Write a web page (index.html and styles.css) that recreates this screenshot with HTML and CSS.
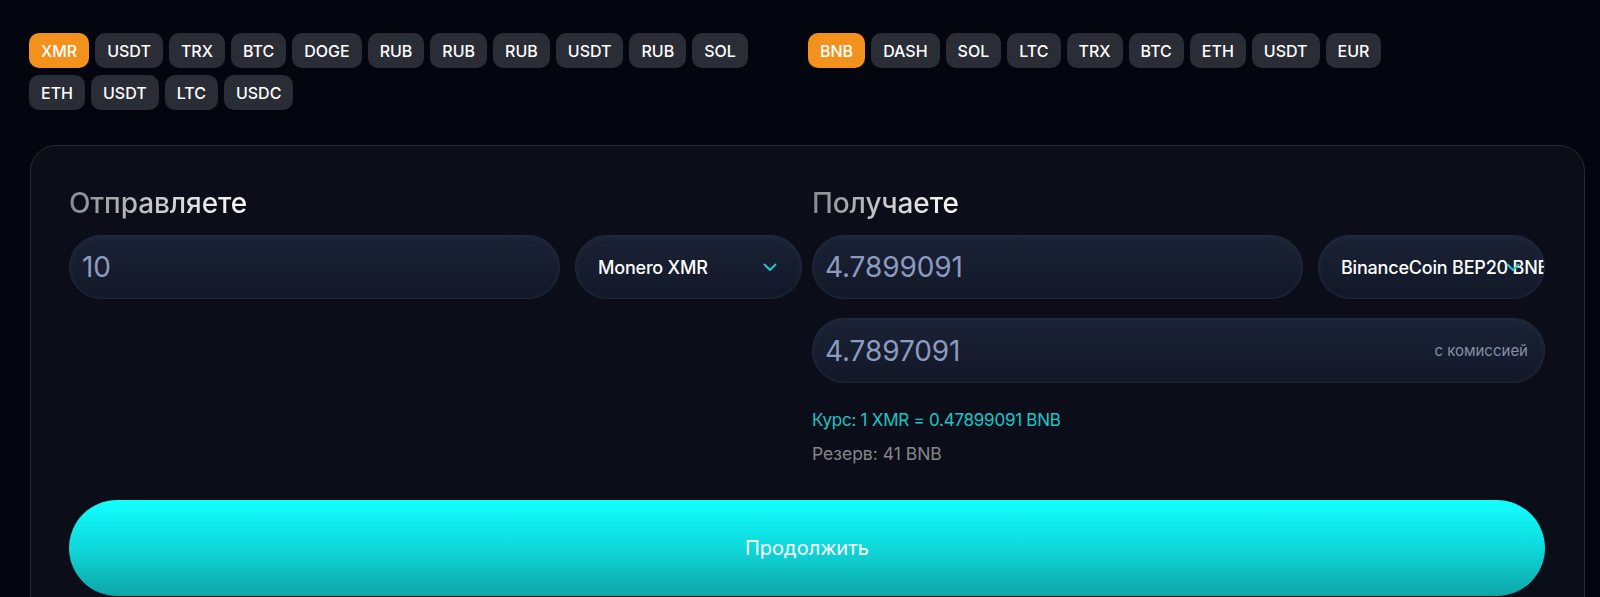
FILE: index.html
```html
<!DOCTYPE html>
<html lang="ru">
<head>
<meta charset="UTF-8" />
<meta name="viewport" content="width=device-width, initial-scale=1" />
<title>Обмен</title>
<link rel="stylesheet" href="styles.css">
</head>
<body>
<div class="page">
  <!-- быстрый выбор валют -->
  <div class="tabs">
    <div class="tab-group">
      <span class="chip active">XMR</span>
      <span class="chip">USDT</span>
      <span class="chip">TRX</span>
      <span class="chip">BTC</span>
      <span class="chip">DOGE</span>
      <span class="chip">RUB</span>
      <span class="chip">RUB</span>
      <span class="chip">RUB</span>
      <span class="chip">USDT</span>
      <span class="chip">RUB</span>
      <span class="chip">SOL</span>
      <span class="chip">ETH</span>
      <span class="chip">USDT</span>
      <span class="chip">LTC</span>
      <span class="chip">USDC</span>
    </div>
    <div class="tab-group">
      <span class="chip active">BNB</span>
      <span class="chip">DASH</span>
      <span class="chip">SOL</span>
      <span class="chip">LTC</span>
      <span class="chip">TRX</span>
      <span class="chip">BTC</span>
      <span class="chip">ETH</span>
      <span class="chip">USDT</span>
      <span class="chip">EUR</span>
    </div>
  </div>

  <!-- форма обмена -->
  <div class="card">
    <div class="columns">
      <div class="col">
        <h2 class="title"><span>Отправляете</span></h2>
        <div class="row">
          <div class="field"><span class="value">10</span></div>
          <div class="select">
            <span class="select-text">Monero XMR</span>
            <svg class="chevron" viewBox="0 0 14 9" width="14" height="9"><path d="M1.5 1.5 L7 7 L12.5 1.5" /></svg>
          </div>
        </div>
      </div>

      <div class="col">
        <h2 class="title"><span>Получаете</span></h2>
        <div class="row">
          <div class="field"><span class="value">4.7899091</span></div>
          <div class="select">
            <span class="select-text">BinanceCoin BEP20 BNB</span>
            <svg class="chevron" viewBox="0 0 14 9" width="14" height="9"><path d="M1.5 1.5 L7 7 L12.5 1.5" /></svg>
          </div>
        </div>
        <div class="field field-wide">
          <span class="value">4.7897091</span>
          <span class="hint">с комиссией</span>
        </div>
        <div class="rate">Курс: 1 XMR = 0.47899091 BNB</div>
        <div class="reserve">Резерв: 41 BNB</div>
      </div>
    </div>

    <button class="submit">Продолжить</button>
  </div>
</div>
</body>
</html>
```

FILE: styles.css
```css
body {
  margin: 0;
  background: #03060f;
  font-family: Inter, "Noto Sans", sans-serif;
  color: #fff;
}
.page {
  padding: 33px 15px 0 29px;
}

/* chips */
.tabs {
  display: grid;
  grid-template-columns: 760px 1fr;
  column-gap: 19px;
}
.tab-group {
  display: flex;
  flex-wrap: wrap;
  gap: 7px 6px;
  align-content: flex-start;
}
.chip {
  height: 35px;
  padding: 0 12px;
  display: flex;
  align-items: center;
  background: #2a2c36;
  border-radius: 10px;
  font-size: 16px;
  font-weight: 500;
  color: #fff;
}
.chip.active {
  background: #f2921d;
}

/* card */
.card {
  margin-top: 35px;
  margin-left: 1px;
  border: 1px solid #262a35;
  border-radius: 26px;
  background: #0b0e19;
  padding: 41px 39px 40px 38px;
}
.columns {
  display: grid;
  grid-template-columns: 1fr 1fr;
  column-gap: 10px;
}
.title {
  margin: 0 0 16px;
  font-size: 28px;
  line-height: 32px;
  font-weight: 500;
  letter-spacing: -0.1px;
}
.title span {
  background: linear-gradient(90deg, #8a8a8e 0%, #c4c4c8 45%, #ffffff 100%);
  -webkit-background-clip: text;
  background-clip: text;
  color: transparent;
}
.row {
  display: flex;
  gap: 15px;
}
.field {
  flex: 1;
  height: 64px;
  box-sizing: border-box;
  border: 1px solid #232a3a;
  border-radius: 32px;
  background: linear-gradient(180deg, #1a2234 0%, #121828 100%);
  box-shadow: inset 0 1px 6px rgba(90, 110, 150, 0.12);
  padding: 0 16px 0 12px;
  display: flex;
  align-items: center;
  justify-content: space-between;
}
.value {
  font-size: 28px;
  color: #8c9abf;
  letter-spacing: -0.1px;
}
.field-wide {
  margin-top: 19px;
  height: 65px;
}
.hint {
  font-size: 15px;
  color: #8690a4;
}
.select {
  position: relative;
  width: 227px;
  flex: none;
  height: 64px;
  box-sizing: border-box;
  border: 1px solid #232a3a;
  border-radius: 32px;
  background: linear-gradient(180deg, #1a2234 0%, #121828 100%);
  box-shadow: inset 0 1px 6px rgba(90, 110, 150, 0.12);
  padding-left: 22px;
  display: flex;
  align-items: center;
  overflow: hidden;
  white-space: nowrap;
}
.select-text {
  font-size: 18px;
  font-weight: 500;
  letter-spacing: -0.2px;
  color: #fff;
}
.chevron {
  position: absolute;
  right: 24px;
  top: 27px;
  fill: none;
  stroke: #1ccfcf;
  stroke-width: 1.8;
  stroke-linecap: round;
  stroke-linejoin: round;
}
.rate {
  margin-top: 25px;
  font-size: 17px;
  line-height: 24px;
  letter-spacing: -0.25px;
  color: #1bc6c6;
}
.reserve {
  margin-top: 10px;
  font-size: 17.5px;
  line-height: 24px;
  letter-spacing: 0;
  color: #858589;
}
.submit {
  display: block;
  width: 100%;
  height: 96px;
  margin-top: 34px;
  border: none;
  border-radius: 48px;
  background: linear-gradient(180deg, #12ffff 0%, #0fdcdf 45%, #0ea6a8 100%);
  font-family: inherit;
  font-size: 20px;
  color: #fff;
  cursor: pointer;
}
```
